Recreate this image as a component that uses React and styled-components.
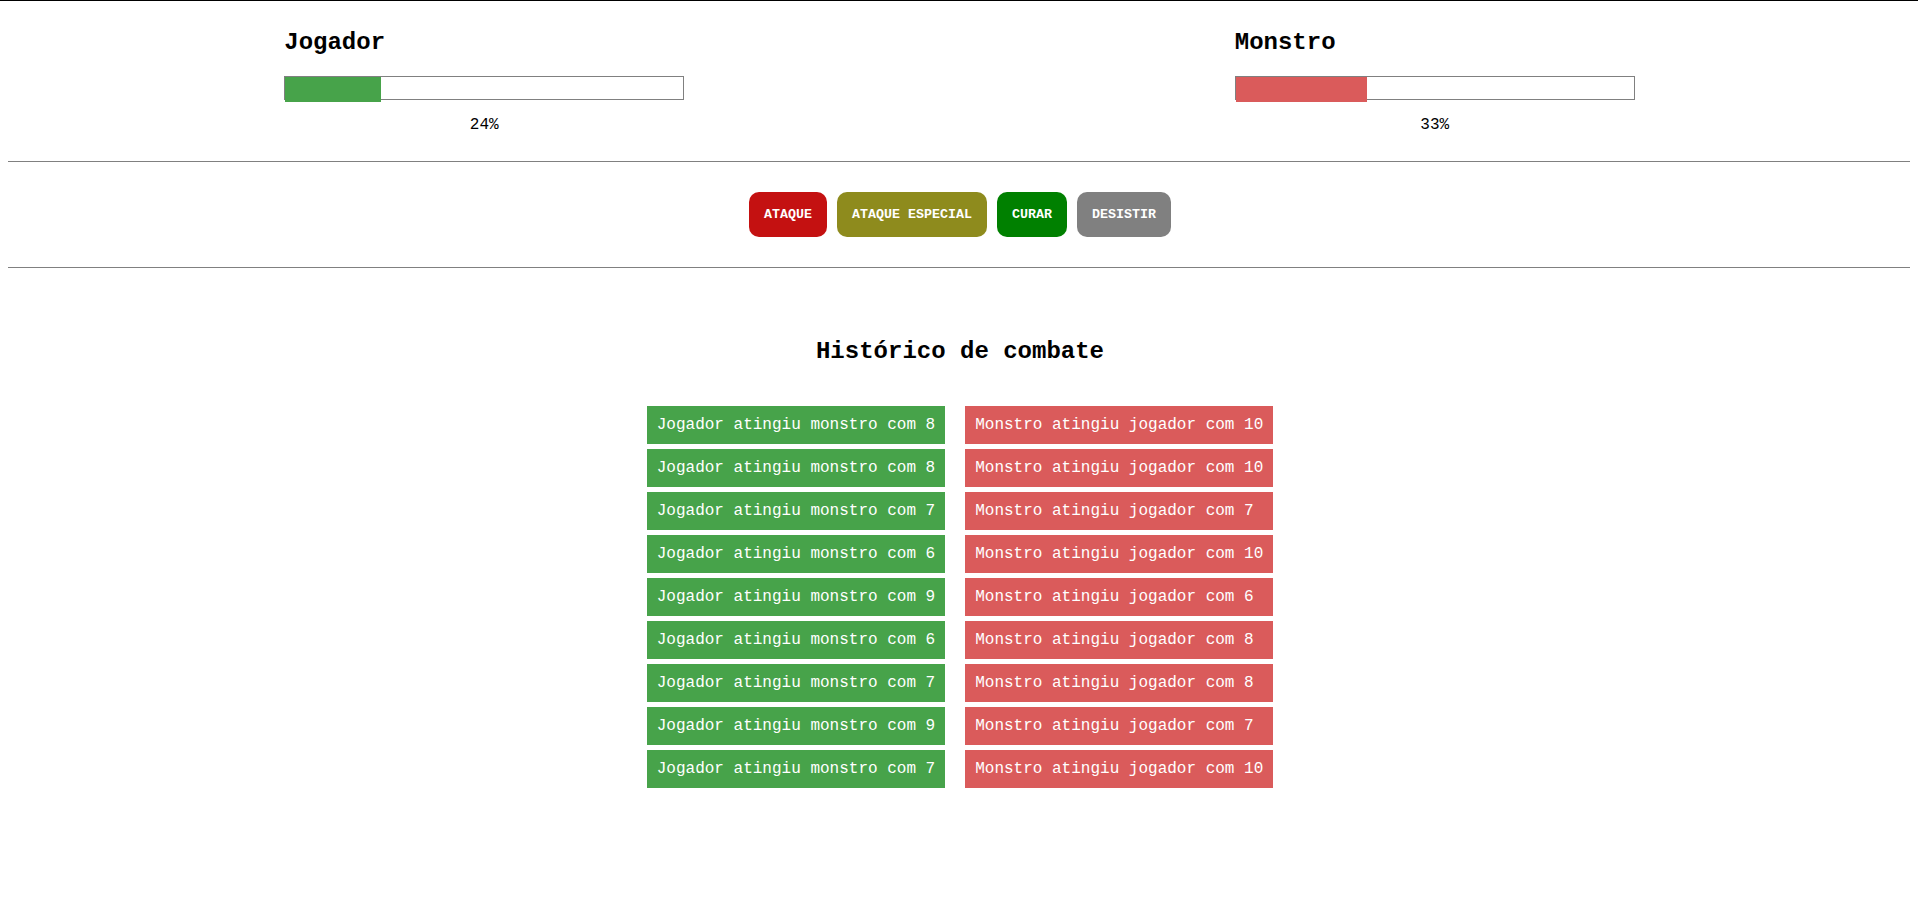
import React from 'react';
import styled, { createGlobalStyle } from 'styled-components';

const GlobalStyle = createGlobalStyle`
  html {
    border-top: 1px solid #000;
  }
  body {
    margin: 0;
    padding: 0 8px;
    background: #fff;
    color: #000;
    font-family: "Liberation Mono", "Courier New", monospace;
  }
`

const Page = styled.div`
  display: flex;
  flex-direction: column;
`

const Header = styled.section`
  display: grid;
  grid-template-columns: 1fr 1fr;
  padding: 28px 0 0 1px;
`

const Fighter = styled.div`
  display: flex;
  flex-direction: column;
  width: 400px;
  justify-self: center;
`

const Name = styled.h2`
  margin: 0;
  font-size: 24px;
  line-height: 27px;
  font-weight: bold;
`

const Bar = styled.div`
  box-sizing: border-box;
  width: 400px;
  height: 24px;
  margin-top: 20px;
  border: 1px solid #808080;
`

const Fill = styled.div`
  height: 25px;
  background: ${p => p.$color};
`

const Percent = styled.p`
  margin: 16px 0 0;
  font-size: 16px;
  line-height: 18px;
  text-align: center;
`

const Rule = styled.hr`
  margin: 0;
  border: none;
  border-top: 1px solid #808080;
  margin-top: ${p => p.$top || 0}px;
`

const Actions = styled.div`
  display: flex;
  justify-content: center;
  gap: 10px;
  padding: 30px 0 30px 2px;
`

const Button = styled.button`
  padding: 15px;
  border: none;
  border-radius: 10px;
  background: ${p => p.$color};
  color: #fff;
  font-family: "Liberation Mono", "Courier New", monospace;
  font-size: 13.33px;
  line-height: 15px;
  font-weight: bold;
  cursor: pointer;
`

const Log = styled.section`
  display: flex;
  flex-direction: column;
  align-items: center;
  padding: 70px 0 0 2px;
`

const LogTitle = styled.h2`
  margin: 0;
  font-size: 24px;
  line-height: 27px;
  font-weight: bold;
`

const Columns = styled.div`
  display: flex;
  gap: 20px;
  margin-top: 41px;
`

const Column = styled.ul`
  display: flex;
  flex-direction: column;
  gap: 5px;
  margin: 0;
  padding: 0;
  list-style: none;
`

const Entry = styled.li`
  padding: 10px;
  background: ${p => p.$color};
  color: #fff;
  font-size: 16px;
  line-height: 18px;
  white-space: pre;
`

const GREEN = '#47a34a';
const RED = '#da5b5b';

const playerHits = [8, 8, 7, 6, 9, 6, 7, 9, 7];
const monsterHits = [10, 10, 7, 10, 6, 8, 8, 7, 10];

function App() {
  const fighters = [
    { name: 'Jogador', life: 24, color: GREEN },
    { name: 'Monstro', life: 33, color: RED },
  ];

  return (
    <Page>
      <GlobalStyle />
      <Header>
        {fighters.map(f => (
          <Fighter key={f.name}>
            <Name>{f.name}</Name>
            <Bar>
              <Fill $color={f.color} style={{ width: `${f.life}%` }} />
            </Bar>
            <Percent>{f.life}%</Percent>
          </Fighter>
        ))}
      </Header>
      <Rule $top={27} />
      <Actions>
        <Button $color="#c41111">ATAQUE</Button>
        <Button $color="#8e8b1d">ATAQUE ESPECIAL</Button>
        <Button $color="#008000">CURAR</Button>
        <Button $color="#808080">DESISTIR</Button>
      </Actions>
      <Rule />
      <Log>
        <LogTitle>Histórico de combate</LogTitle>
        <Columns>
          <Column>
            {playerHits.map((n, i) => (
              <Entry key={i} $color={GREEN}>Jogador atingiu monstro com {n}</Entry>
            ))}
          </Column>
          <Column>
            {monsterHits.map((n, i) => (
              <Entry key={i} $color={RED}>Monstro atingiu jogador com {n}</Entry>
            ))}
          </Column>
        </Columns>
      </Log>
    </Page>
  );
}

export default App;
